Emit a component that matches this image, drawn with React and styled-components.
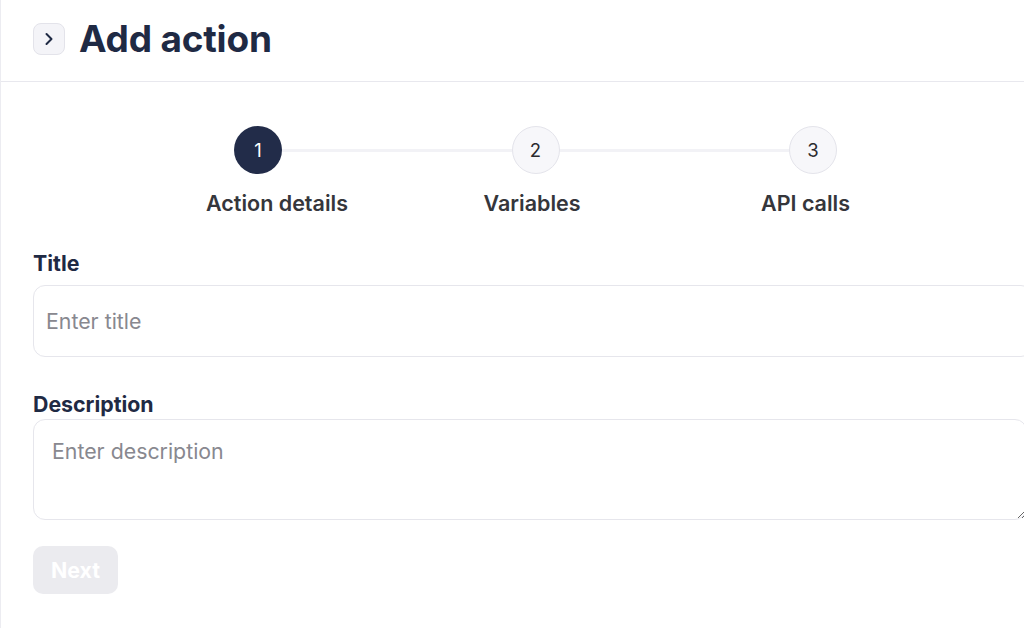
import React from "react";
import styled, { createGlobalStyle } from "styled-components";

const Global = createGlobalStyle`
  html, body { margin: 0; padding: 0; background: #fff; overflow: hidden; }
  body { font-family: Inter, "Noto Sans", sans-serif; -webkit-font-smoothing: antialiased; }
  * { box-sizing: border-box; }
`;

const Page = styled.div`
  width: 1062px;
  min-height: 628px;
  border-left: 1px solid #ececf1;
`;

const Header = styled.header`
  height: 82px;
  display: flex;
  align-items: center;
  gap: 14px;
  padding: 0 0 4px 32px;
  border-bottom: 1px solid #e8e8ee;
`;

const ToggleButton = styled.button`
  width: 32px;
  height: 32px;
  border-radius: 8px;
  border: 1px solid #e3e3ea;
  background: #f4f4f8;
  display: flex;
  align-items: center;
  justify-content: center;
  padding: 0;
  color: #1f2a44;
`;

const Title = styled.h1`
  margin: 0;
  font-size: 37px;
  font-weight: 700;
  color: #1f2a44;
  letter-spacing: -0.2px;
`;

const Content = styled.main`
  padding: 44px 0 0 32px;
`;

const Stepper = styled.ol`
  list-style: none;
  margin: 0;
  padding: 0 0 0 173px;
  display: grid;
  grid-template-columns: repeat(3, 277.5px);
`;

const Step = styled.li`
  position: relative;
  display: flex;
  flex-direction: column;
  align-items: flex-start;
  &:not(:last-child)::after {
    content: "";
    position: absolute;
    top: 23px;
    left: 76px;
    width: 229.5px;
    height: 3px;
    background: #f2f2f6;
  }
`;

const Circle = styled.div`
  width: 48px;
  height: 48px;
  margin-left: 28px;
  border-radius: 50%;
  display: flex;
  align-items: center;
  justify-content: center;
  font-size: 18.5px;
  font-weight: 400;
  background: ${(p) => (p.$active ? "#222c49" : "#f7f7fa")};
  color: ${(p) => (p.$active ? "#ffffff" : "#2b2b2f")};
  border: ${(p) => (p.$active ? "none" : "1px solid #e4e4eb")};
`;

const StepLabel = styled.div`
  margin-top: 16px;
  font-size: 21.5px;
  line-height: 26px;
  font-weight: 600;
  color: #35363b;
  white-space: nowrap;
`;

const Field = styled.div`
  display: flex;
  flex-direction: column;
  margin-top: ${(p) => p.$top}px;
`;

const Label = styled.label`
  font-size: 21.33px;
  line-height: 26px;
  font-weight: 700;
  color: #1f2a44;
  margin-bottom: ${(p) => p.$gap}px;
`;

const TextInput = styled.input`
  width: 1000px;
  height: 72px;
  border: 1px solid #e6e6ec;
  border-radius: 12px;
  padding: 0 12px;
  font-family: inherit;
  font-size: 21.33px;
  color: #1f2a44;
  outline: none;
  &::placeholder { color: #88888f; }
`;

const TextArea = styled.textarea`
  width: 994px;
  height: 101px;
  border: 1px solid #e6e6ec;
  border-radius: 12px;
  padding: 18px 18px;
  font-family: inherit;
  font-size: 21.33px;
  line-height: 26px;
  color: #1f2a44;
  outline: none;
  resize: vertical;
  &::placeholder { color: #88888f; }
`;

const NextButton = styled.button`
  margin-top: 26px;
  width: 85px;
  height: 48px;
  border: none;
  border-radius: 10px;
  background: #ebebef;
  color: #ffffff;
  font-family: inherit;
  font-size: 21.33px;
  font-weight: 700;
`;

const steps = ["Action details", "Variables", "API calls"];

export default function App() {
  return (
    <>
      <Global />
      <Page>
        <Header>
          <ToggleButton aria-label="Toggle sidebar">
            <svg width="20" height="20" viewBox="0 0 24 24" fill="none" stroke="currentColor" strokeWidth="2.4" strokeLinecap="round" strokeLinejoin="round">
              <path d="M9 6l6 6-6 6" />
            </svg>
          </ToggleButton>
          <Title>Add action</Title>
        </Header>
        <Content>
          <Stepper>
            {steps.map((s, i) => (
              <Step key={s}>
                <Circle $active={i === 0}>{i + 1}</Circle>
                <StepLabel>{s}</StepLabel>
              </Step>
            ))}
          </Stepper>
          <Field $top={34}>
            <Label $gap={9}>Title</Label>
            <TextInput placeholder="Enter title" />
          </Field>
          <Field $top={34}>
            <Label $gap={2}>Description</Label>
            <TextArea placeholder="Enter description" />
          </Field>
          <NextButton disabled>Next</NextButton>
        </Content>
      </Page>
    </>
  );
}
